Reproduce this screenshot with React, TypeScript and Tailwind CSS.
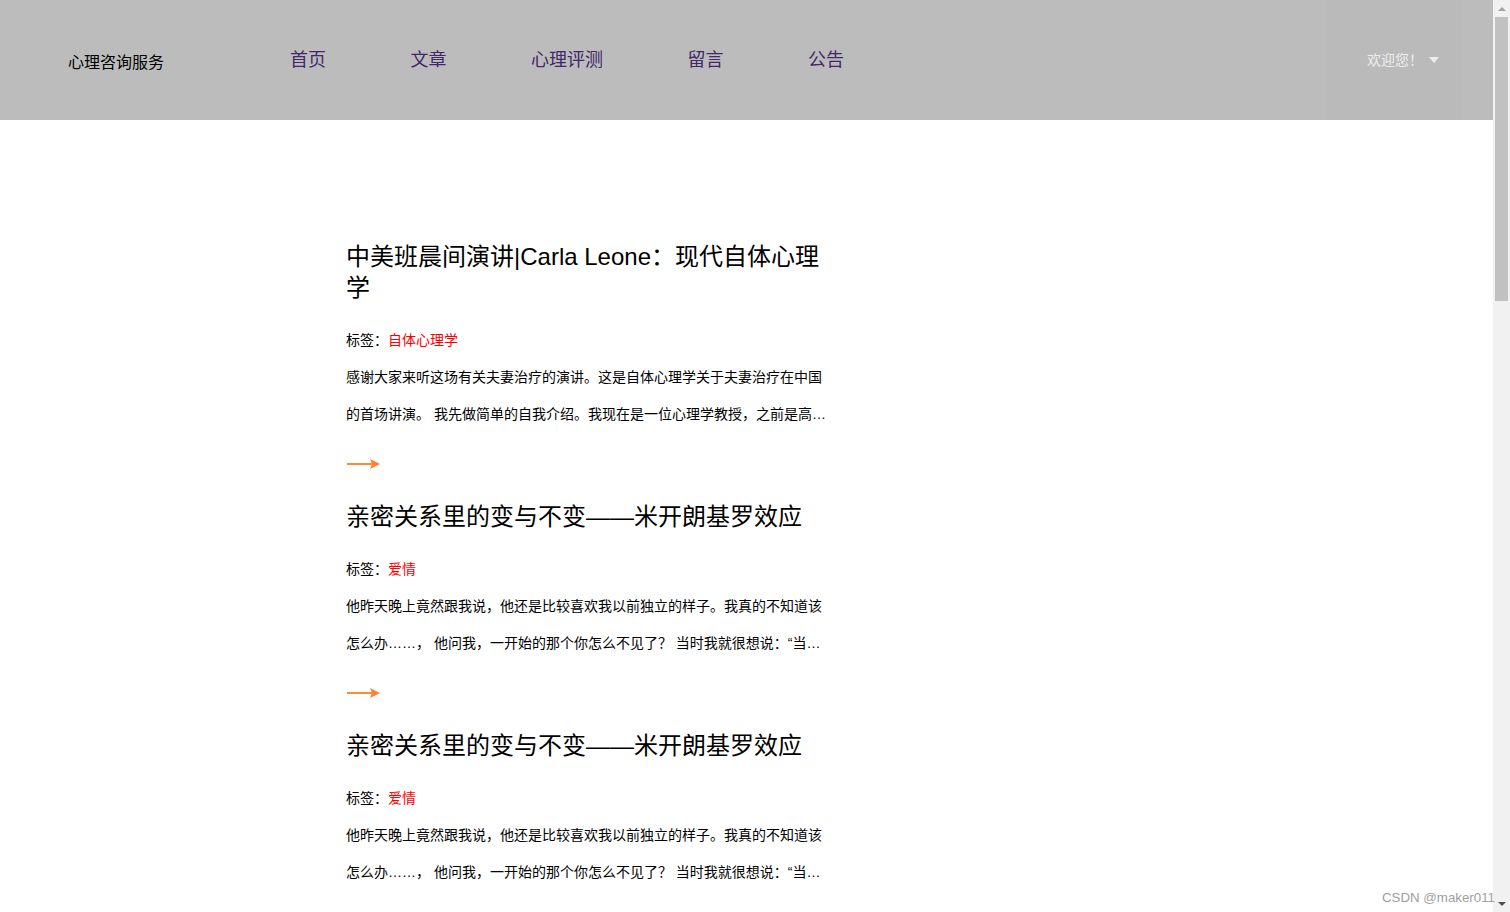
const navItems = ["首页", "文章", "心理评测", "留言", "公告"];

const articles = [
  {
    title: "中美班晨间演讲|Carla Leone：现代自体心理学",
    tag: "自体心理学",
    body: "感谢大家来听这场有关夫妻治疗的演讲。这是自体心理学关于夫妻治疗在中国的首场讲演。 我先做简单的自我介绍。我现在是一位心理学教授，之前是高校的老师，也做过很多年的临床工作。",
  },
  {
    title: "亲密关系里的变与不变——米开朗基罗效应",
    tag: "爱情",
    body: "他昨天晚上竟然跟我说，他还是比较喜欢我以前独立的样子。我真的不知道该怎么办……， 他问我，一开始的那个你怎么不见了？ 当时我就很想说：“当初不是你说喜欢我依赖你的吗，现在又这样说。”",
  },
  {
    title: "亲密关系里的变与不变——米开朗基罗效应",
    tag: "爱情",
    body: "他昨天晚上竟然跟我说，他还是比较喜欢我以前独立的样子。我真的不知道该怎么办……， 他问我，一开始的那个你怎么不见了？ 当时我就很想说：“当初不是你说喜欢我依赖你的吗，现在又这样说。”",
  },
];

const ArrowIcon = () => (
  <svg width="33" height="16" viewBox="0 0 33 16" className="block">
    <path d="M0 8H26" stroke="#ff8a3c" strokeWidth="2" />
    <path d="M23 3L33 8L23 13L25 8Z" fill="#ff8030" />
  </svg>
);

const App = () => {
  return (
    <div className="relative flex h-[912px] overflow-hidden bg-white font-['Liberation_Sans','Noto_Sans_CJK_SC',sans-serif] text-black">
      <div className="min-w-0 flex-1">
        <header className="flex h-[120px] items-center bg-[#bcbcbc] pl-[68px] pr-[30px]">
          <div className="mt-1.5 w-[96px] text-base">心理咨询服务</div>
          <nav className="ml-[126px] flex gap-[84.5px] text-lg text-[#42276a]">
            {navItems.map((item) => (
              <a key={item} href="#" className="whitespace-nowrap">
                {item}
              </a>
            ))}
          </nav>
          <div className="ml-auto flex h-full w-[136px] items-center bg-[#bababa] pl-10 text-sm text-[#eeeeee]">
            欢迎您！
            <span className="ml-1.5 h-0 w-0 border-x-[5.5px] border-t-[6px] border-x-transparent border-t-[#eeeeee]" />
          </div>
        </header>

        <main className="w-[826px] pl-[346px] pt-[121px]">
          {articles.map((article) => (
            <article key={article.title + article.tag} className="mb-[29px]">
              <h2 className="text-2xl leading-[31px]">{article.title}</h2>
              <p className="mt-[19px] text-sm leading-[37px]">
                标签：<span className="text-[#ff0000]">{article.tag}</span>
              </p>
              <p className="line-clamp-2 text-sm leading-[37px]">{article.body}</p>
              <div className="ml-px mt-[23px]">
                <ArrowIcon />
              </div>
            </article>
          ))}
        </main>
      </div>

      <aside className="flex w-[17px] shrink-0 flex-col items-center bg-[#f1f1f1]">
        <div className="flex h-[17px] items-center justify-center">
          <span className="h-0 w-0 border-x-4 border-b-4 border-x-transparent border-b-[#a3a3a3]" />
        </div>
        <div className="h-[284px] w-[13px] bg-[#c1c1c1]" />
        <div className="mt-auto flex h-[17px] items-center justify-center">
          <span className="h-0 w-0 border-x-4 border-t-4 border-x-transparent border-t-[#505050]" />
        </div>
      </aside>

      <div className="absolute bottom-[6px] right-[15px] text-[13.3px] leading-4 text-[#a0a0a0]">CSDN @maker011</div>
    </div>
  );
};

export default App;
